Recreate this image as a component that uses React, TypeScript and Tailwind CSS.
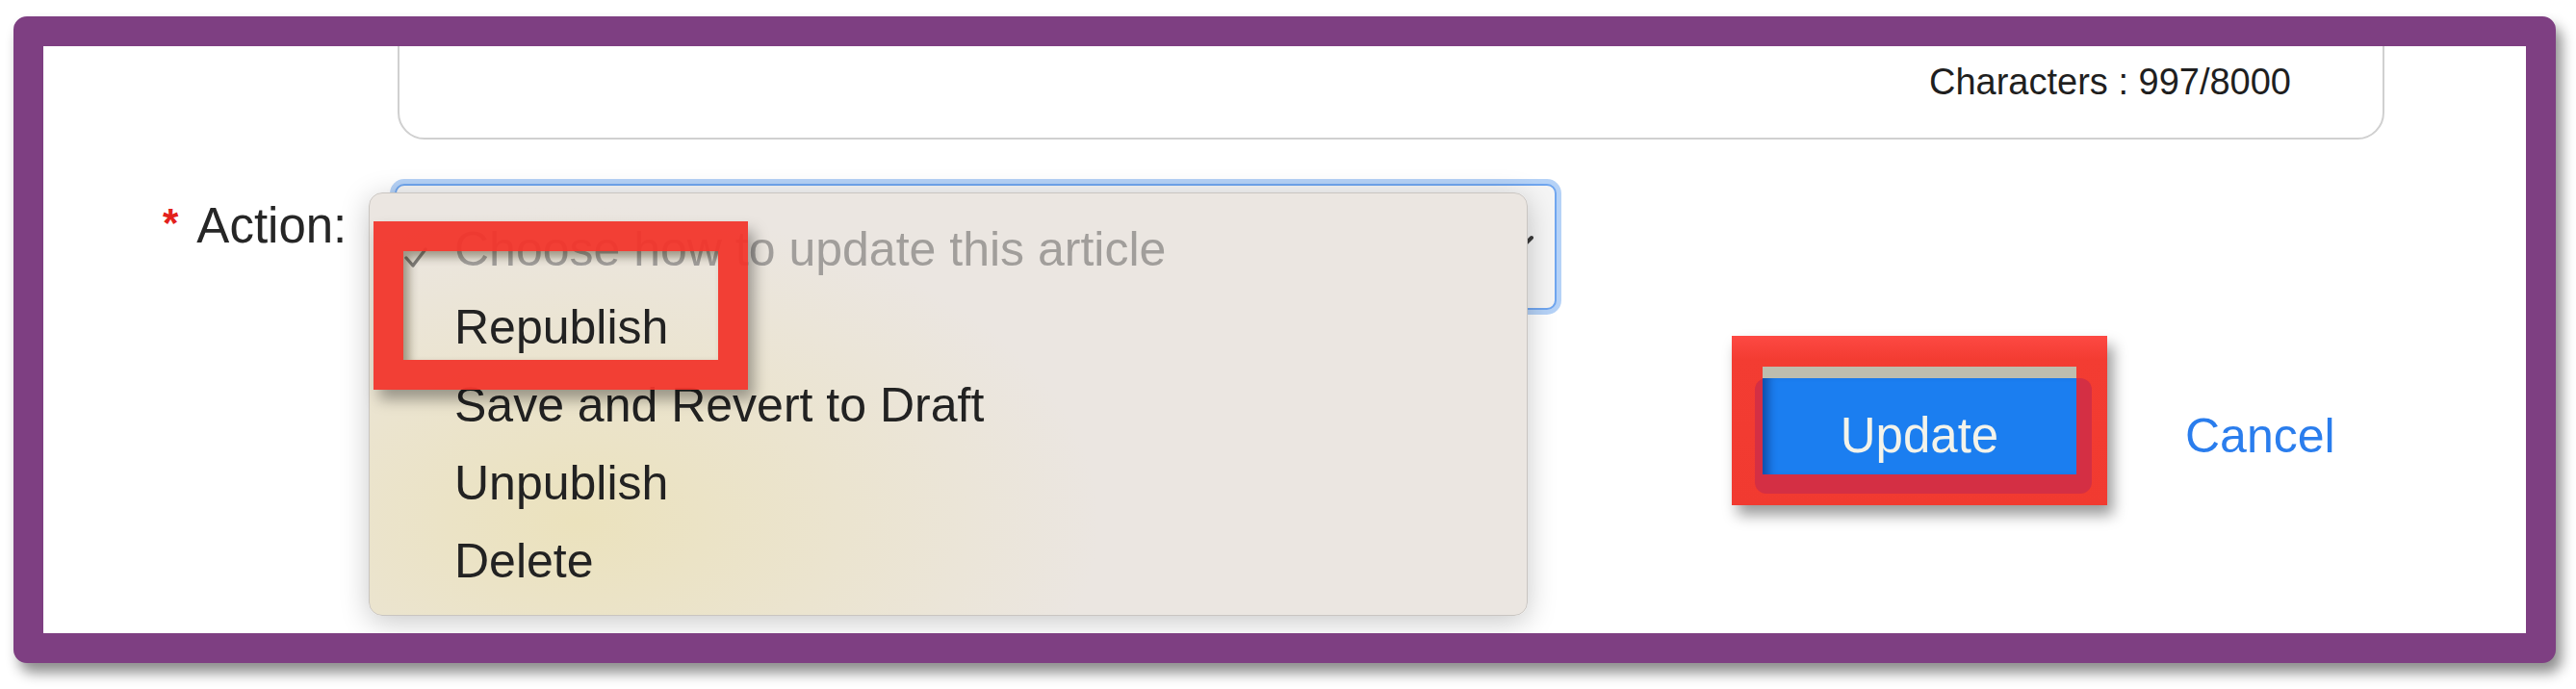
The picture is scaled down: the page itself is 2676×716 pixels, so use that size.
const items = ['Republish', 'Save and Revert to Draft', 'Unpublish', 'Delete'];

function Check() {
  return (
    <svg width="24" height="22" viewBox="0 0 24 22" fill="none">
      <path d="M2 11 L9 19 L22 2" stroke="#7f7d7a" strokeWidth="3.4" strokeLinecap="round" strokeLinejoin="round" />
    </svg>
  );
}

function ActionMenu() {
  return (
    <div className="absolute left-[-29px] top-[7px] w-[1204px] h-[440px] rounded-[14px] border border-[#c9c5c1] bg-[radial-gradient(ellipse_45%_75%_at_18%_78%,#ebe2bd_0%,#ebe6e1_100%)] shadow-[0_6px_30px_rgba(0,0,0,0.22)] pt-[18px]">
      <div className="flex items-start h-[81px]">
        <div className="w-[88px] shrink-0 pl-[36px] pt-[38px]">
          <Check />
        </div>
        <span className="text-[50px] leading-[81px] text-[#a19e9b] whitespace-nowrap">
          Choose how to update this article
        </span>
      </div>
      {items.map((label) => (
        <div key={label} className="flex items-start h-[81px]">
          <div className="w-[88px] shrink-0" />
          <span className="text-[50px] leading-[81px] text-[#222222] whitespace-nowrap">{label}</span>
        </div>
      ))}

      {/* annotation box round Republish */}
      <div className="absolute left-[4px] top-[29px] w-[389px] h-[175px] border-[31px] border-[#f2342af0] shadow-[inset_6px_6px_10px_rgba(40,30,0,0.4),6px_10px_14px_rgba(0,0,0,0.35)]" />
    </div>
  );
}

export default function App() {
  return (
    <div className="w-[2676px] h-[716px] bg-white pt-[17px] pl-[14px] font-['Liberation_Sans',Arial,sans-serif]">
      <div className="w-[2641px] h-[672px] rounded-[14px] border-[31px] border-[#7e3f82] bg-white shadow-[6px_10px_14px_rgba(0,0,0,0.45)]">
        <div className="relative h-full w-full overflow-hidden flex flex-col">
          {/* bottom of the description textarea */}
          <div className="ml-[368px] -mt-[40px] h-[137px] w-[2064px] shrink-0 rounded-[28px] border-2 border-[#d0d0d0] flex justify-end items-start pt-[56px] pr-[95px]">
            <span className="text-[38px] leading-[38px] text-[#1f1f1f]">Characters : 997/8000</span>
          </div>

          {/* action row */}
          <div className="mt-[46px] flex items-start shrink-0">
            <div className="w-[365px] shrink-0 flex items-start pl-[124px]">
              <span className="mt-[20px] text-[42px] leading-[42px] font-bold text-[#e3211c]">*</span>
              <span className="ml-[19px] mt-[18px] text-[51px] leading-[51px] text-[#262626]">Action:</span>
            </div>
            <div className="relative w-[1207px] h-[131px] rounded-[10px] border-2 border-[#70a6ef] bg-[#f5f5f5] shadow-[0_0_0_5px_#b5d2f7]">
              <svg className="absolute right-[20px] top-[50px]" width="30" height="20" viewBox="0 0 30 20" fill="none">
                <path d="M4 4 L15 15 L26 4" stroke="#3a3a3a" strokeWidth="4" strokeLinecap="round" strokeLinejoin="round" />
              </svg>
              <ActionMenu />
            </div>
          </div>

          {/* buttons row */}
          <div className="mt-[27px] flex items-start shrink-0">
            <div className="relative ml-[1754px] w-[390px] h-[176px] bg-[linear-gradient(180deg,#fd4943_0%,#f33c32_14%,#f13a30_100%)] shadow-[6px_10px_14px_rgba(0,0,0,0.4)]">
              <div className="absolute left-[24px] top-[44px] w-[350px] h-[120px] rounded-[12px] bg-[#d42f44]" />
              <div className="absolute left-[32px] top-[32px] w-[326px] h-[112px] flex flex-col">
                <div className="h-[12px] bg-[#bebdae]" />
                <div className="flex-1 bg-[#1b7ef0] shadow-[inset_12px_0_10px_-6px_rgba(0,20,80,0.45)] flex justify-center pt-[34px]">
                  <span className="text-[51px] leading-[51px] text-[#f3f3ea]">Update</span>
                </div>
              </div>
            </div>
            <span className="ml-[81px] mt-[79px] text-[50px] leading-[50px] text-[#2a7ded]">Cancel</span>
          </div>
        </div>
      </div>
    </div>
  );
}
